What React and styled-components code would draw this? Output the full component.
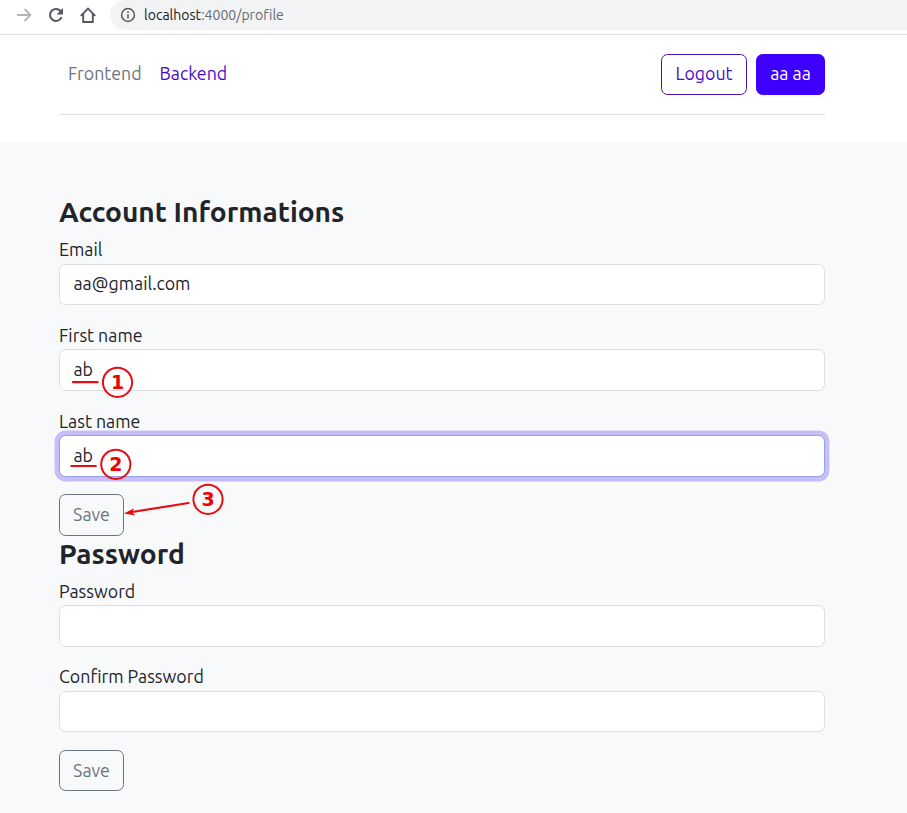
import React from "react";
import styled, { createGlobalStyle } from "styled-components";

const GlobalStyle = createGlobalStyle`
  *, *::before, *::after { box-sizing: border-box; }
  html, body { margin: 0; background: #fff; overflow: hidden; }
  body {
    font-family: Ubuntu, "Noto Sans", "Open Sans", sans-serif;
    font-size: 17.75px;
    line-height: 26.4px;
    color: #212529;
  }
`;

const Page = styled.div`
  display: flex;
  flex-direction: column;
  height: 813px;
  overflow: hidden;
`;

const BrowserBar = styled.div`
  flex: none;
  display: flex;
  align-items: flex-start;
  height: 35px;
  padding-left: 16px;
  border-bottom: 1px solid #d9dbde;
`;

const BarIcon = styled.svg`
  flex: none;
  width: 16px;
  height: 16px;
  margin: 7px 16px 0 0;
  fill: none;
  stroke: ${(p) => p.$color || "#55585c"};
  stroke-width: 2;
`;

const AddressField = styled.div`
  flex: 1;
  display: flex;
  align-items: center;
  height: 30px;
  margin-left: -2px;
  padding-left: 10px;
  border-radius: 15px 0 0 15px;
  background: #f1f3f4;
`;

const InfoIcon = styled.svg`
  width: 16px;
  height: 16px;
  margin-right: 8px;
  fill: none;
  stroke: #55585c;
  stroke-width: 1.5;
`;

const Address = styled.span`
  font-size: 14px;
  line-height: 20px;
  letter-spacing: 0.02px;
  color: #66696d;
`;

const Host = styled.span`
  color: #202124;
`;

const Container = styled.div`
  margin: 0 82px 0 59px;
`;

const Header = styled.header`
  flex: none;
  height: 107.4px;
`;

const HeaderRow = styled(Container)`
  display: flex;
  align-items: center;
  justify-content: space-between;
  height: 80px;
  border-bottom: 1px solid #dee0e3;
`;

const Nav = styled.nav`
  display: flex;
  gap: 18px;
  padding: 0 0 2px 9px;
`;

const NavLink = styled.a`
  color: ${(p) => (p.$active ? "#4a0dc4" : "#6c757d")};
`;

const Actions = styled.div`
  display: flex;
  gap: 9px;
`;

const Button = styled.button`
  display: block;
  width: ${(p) => p.$width}px;
  height: ${(p) => p.$height || 41.4}px;
  padding: 0 0 ${(p) => (p.$height ? 2 : 1)}px;
  border: 1px solid ${(p) => p.$border};
  border-radius: 6.6px;
  background: ${(p) => p.$fill || "transparent"};
  color: ${(p) => p.$color};
  font: inherit;
`;

const Main = styled.main`
  flex: 1;
  padding-top: 52.1px;
  background: #f8f9fb;
`;

const Title = styled.h2`
  height: 34px;
  margin: 0 0 8.8px;
  font-size: 28.1px;
  line-height: 35.6px;
  font-weight: 600;
`;

const Field = styled.div`
  margin-bottom: 17.7px;
`;

const Label = styled.label`
  display: block;
  height: 26.4px;
  line-height: 25px;
`;

const Input = styled.input`
  display: block;
  width: 100%;
  height: 41.8px;
  margin-bottom: -0.2px;
  padding: 0 13.5px 2.4px;
  border: 1px solid ${(p) => (p.$focused ? "#94a0e2" : "#dce0e5")};
  border-radius: 6.6px;
  outline: none;
  background: #fff;
  box-shadow: ${(p) => (p.$focused ? "0 0 0 4.4px #c7bdf8" : "none")};
  color: #212529;
  font: inherit;
`;

const Annotations = styled.svg`
  position: absolute;
  left: 0;
  top: 0;
  width: 907px;
  height: 813px;
  pointer-events: none;
`;

const MarkerCircle = styled.circle`
  fill: none;
  stroke: #e90c10;
  stroke-width: 2;
`;

const MarkerText = styled.text`
  fill: #f00000;
  font: bold 19px "DejaVu Sans", sans-serif;
  text-anchor: middle;
`;

const MarkerLine = styled.path`
  fill: none;
  stroke: #e90c10;
  stroke-width: 2.2;
  stroke-linecap: round;
`;

const markers = [
  { n: 1, x: 117.5, y: 382.3 },
  { n: 2, x: 115.8, y: 464.3 },
  { n: 3, x: 208, y: 499.3 },
];

function FormField({ id, label, value = "", type = "text", focused }) {
  return (
    <Field>
      <Label htmlFor={id}>{label}</Label>
      <Input id={id} type={type} defaultValue={value} $focused={focused} />
    </Field>
  );
}

export default function App() {
  return (
    <Page>
      <GlobalStyle />
      <BrowserBar>
        <BarIcon viewBox="0 0 16 16" $color="#b2b4b6">
          <path d="M1 8h13M8.5 2l6 6-6 6" strokeWidth="1.8" />
        </BarIcon>
        <BarIcon viewBox="0 0 16 16">
          <path d="M13.6 10.2A6 6 0 1 1 12.4 3.8L14 5.4" />
          <path d="M15 1v6.4H8.6z" fill="#55585c" stroke="none" />
        </BarIcon>
        <BarIcon viewBox="0 0 16 16">
          <path d="M.8 8.8 8 1.6l7.2 7.2M3.2 7v8h9.6V7" strokeWidth="1.9" />
        </BarIcon>
        <AddressField>
          <InfoIcon viewBox="0 0 16 16">
            <circle cx="8" cy="8" r="6.4" />
            <path d="M8 7.2v4.3M8 4.3v1.6" />
          </InfoIcon>
          <Address><Host>localhost</Host>:4000/profile</Address>
        </AddressField>
      </BrowserBar>
      <Header>
        <HeaderRow>
          <Nav>
            <NavLink>Frontend</NavLink>
            <NavLink $active>Backend</NavLink>
          </Nav>
          <Actions>
            <Button $width={86} $height={41} $border="#4310b4" $color="#4a0dc4">Logout</Button>
            <Button $width={69} $height={41} $border="#3d00ff" $fill="#3d00ff" $color="#fff">aa aa</Button>
          </Actions>
        </HeaderRow>
      </Header>
      <Main>
        <Container>
          <Title>Account Informations</Title>
          <FormField id="email" label="Email" value="aa@gmail.com" />
          <FormField id="first" label="First name" value="ab" />
          <FormField id="last" label="Last name" value="ab" focused />
          <Button $width={65} $border="#6c757d" $color="#6c757d">Save</Button>
          <Title>Password</Title>
          <FormField id="password" label="Password" type="password" />
          <FormField id="confirm" label="Confirm Password" type="password" />
          <Button $width={65} $border="#6c757d" $color="#6c757d">Save</Button>
        </Container>
      </Main>
      <Annotations viewBox="0 0 907 813">
        <MarkerLine d="M73 382.2H97.5M71.3 466H95.8M188.5 503 132 512" />
        <path d="M124 513.5 134 508.2 132 512.2 135.2 515.6z" fill="#e90c10" />
        {markers.map((m) => (
          <g key={m.n}>
            <MarkerCircle cx={m.x} cy={m.y} r="14.6" />
            <MarkerText x={m.x} y={m.y + 6.7}>{m.n}</MarkerText>
          </g>
        ))}
      </Annotations>
    </Page>
  );
}
